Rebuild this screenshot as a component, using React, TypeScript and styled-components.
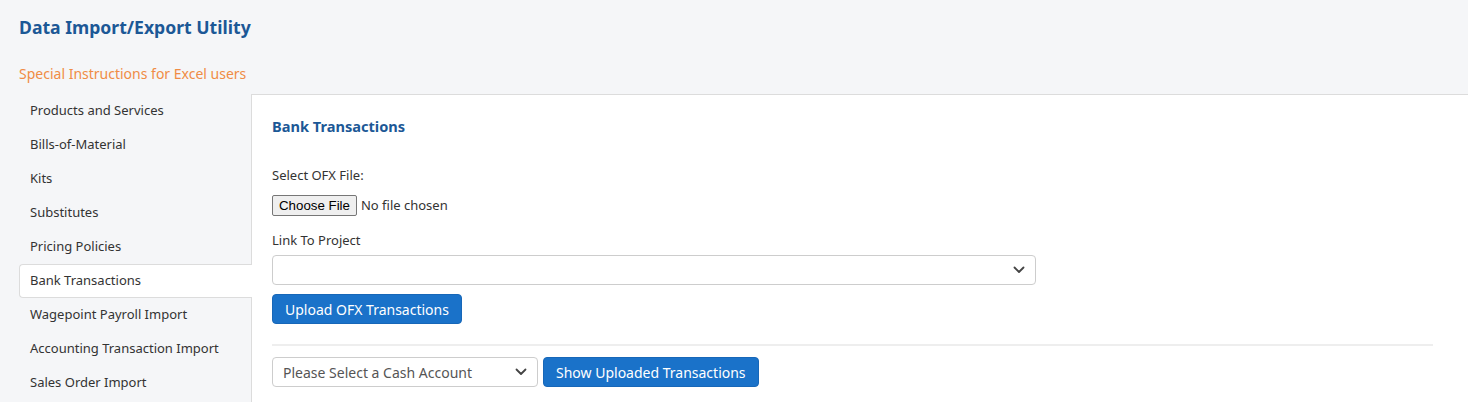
import React from "react";
import styled, { createGlobalStyle } from "styled-components";

const GlobalStyle = createGlobalStyle`
  html, body { margin: 0; padding: 0; }
  body {
    background: #f5f6f8;
    font-family: "Noto Sans", "Open Sans", sans-serif;
    color: #333;
  }
`;

const Page = styled.div`
  display: flex;
  flex-direction: column;
  min-height: 402px;
  background: #f5f6f8;
`;

const Header = styled.header`
  display: flex;
  flex-direction: column;
  padding: 15px 0 10px 19px;
`;

const Title = styled.h1`
  margin: 0;
  font-size: 17.6px;
  line-height: 24px;
  font-weight: 700;
  color: #1c5896;
`;

const InstructionsLink = styled.a`
  margin-top: 25px;
  font-size: 14px;
  line-height: 20px;
  color: #f08c45;
  text-decoration: none;
  cursor: pointer;
`;

const Body = styled.div`
  display: flex;
  flex: 1;
  align-items: stretch;
`;

const Sidebar = styled.nav`
  width: 251px;
  flex-shrink: 0;
  padding-left: 19px;
  box-sizing: border-box;
  display: flex;
  flex-direction: column;
`;

const NavItem = styled.div<{ $active?: boolean }>`
  height: 34px;
  display: flex;
  align-items: center;
  padding: 0 0 2px 10px;
  box-sizing: border-box;
  font-size: 13px;
  color: #333;
  cursor: pointer;
  position: relative;
  margin-right: ${(p) => (p.$active ? "-1px" : "0")};
  background: ${(p) => (p.$active ? "#fff" : "transparent")};
  border: 1px solid ${(p) => (p.$active ? "#dcdcdc" : "transparent")};
  border-right: none;
  border-radius: 4px 0 0 4px;
  z-index: 1;
`;

const Panel = styled.main`
  flex: 1;
  background: #fff;
  border-top: 1px solid #dcdcdc;
  border-left: 1px solid #dcdcdc;
  padding: 21px 35px 20px 20px;
  display: flex;
  flex-direction: column;
`;

const SectionTitle = styled.h2`
  margin: 0;
  font-size: 14.6px;
  line-height: 20px;
  font-weight: 700;
  color: #1c5896;
`;

const FieldLabel = styled.label<{ $top: number }>`
  margin-top: ${(p) => p.$top}px;
  font-size: 13px;
  line-height: 18px;
  color: #333;
`;

const FileRow = styled.div`
  display: flex;
  align-items: center;
  gap: 4px;
  margin-top: 10px;
  height: 22px;
`;

const FileButton = styled.button`
  font-family: "Liberation Sans", Arial, sans-serif;
  font-size: 13.3px;
  color: #000;
  background: #efefef;
  border: 1px solid #767676;
  border-radius: 2px;
  height: 21px;
  padding: 0 6px;
  line-height: 19px;
`;

const FileStatus = styled.span`
  font-size: 13px;
  color: #333;
`;

const SelectBox = styled.div<{ $width: number }>`
  width: ${(p) => p.$width}px;
  height: 30px;
  box-sizing: border-box;
  border: 1px solid #cdcdcd;
  border-radius: 4px;
  background: #fff;
  display: flex;
  align-items: center;
  justify-content: space-between;
  padding: 0 10px 0 10px;
  font-size: 14px;
  color: #555;
  flex-shrink: 0;
`;

const Chevron = () => (
  <svg width="12" height="8" viewBox="0 0 12 8" aria-hidden>
    <path d="M1.5 1.5 L6 6 L10.5 1.5" fill="none" stroke="#444" strokeWidth="1.8" strokeLinecap="round" strokeLinejoin="round" />
  </svg>
);

const PrimaryButton = styled.button`
  height: 30px;
  padding: 0 12px;
  background: #1a72c9;
  border: 1px solid #1767b8;
  border-radius: 4px;
  color: #fff;
  font-family: "Noto Sans", "Open Sans", sans-serif;
  font-size: 14px;
  cursor: pointer;
  flex-shrink: 0;
`;

const Stack = styled.div<{ $top: number }>`
  margin-top: ${(p) => p.$top}px;
  display: flex;
`;

const Divider = styled.hr`
  margin: 20px 0 11px 0;
  border: none;
  border-top: 2px solid #eeeeee;
  height: 0;
  width: 1161px;
`;

const ActionRow = styled.div`
  display: flex;
  align-items: center;
  gap: 5px;
`;

const navItems = [
  "Products and Services",
  "Bills-of-Material",
  "Kits",
  "Substitutes",
  "Pricing Policies",
  "Bank Transactions",
  "Wagepoint Payroll Import",
  "Accounting Transaction Import",
  "Sales Order Import",
];

export default function App() {
  return (
    <>
      <GlobalStyle />
      <Page>
        <Header>
          <Title>Data Import/Export Utility</Title>
          <InstructionsLink>Special Instructions for Excel users</InstructionsLink>
        </Header>
        <Body>
          <Sidebar>
            {navItems.map((item) => (
              <NavItem key={item} $active={item === "Bank Transactions"}>
                {item}
              </NavItem>
            ))}
          </Sidebar>
          <Panel>
            <SectionTitle>Bank Transactions</SectionTitle>
            <FieldLabel $top={30}>Select OFX File:</FieldLabel>
            <FileRow>
              <FileButton type="button">Choose File</FileButton>
              <FileStatus>No file chosen</FileStatus>
            </FileRow>
            <FieldLabel $top={15}>Link To Project</FieldLabel>
            <Stack $top={6}>
              <SelectBox $width={764}>
                <span />
                <Chevron />
              </SelectBox>
            </Stack>
            <Stack $top={9}>
              <PrimaryButton type="button">Upload OFX Transactions</PrimaryButton>
            </Stack>
            <Divider />
            <ActionRow>
              <SelectBox $width={266}>
                <span>Please Select a Cash Account</span>
                <Chevron />
              </SelectBox>
              <PrimaryButton type="button">Show Uploaded Transactions</PrimaryButton>
            </ActionRow>
          </Panel>
        </Body>
      </Page>
    </>
  );
}
